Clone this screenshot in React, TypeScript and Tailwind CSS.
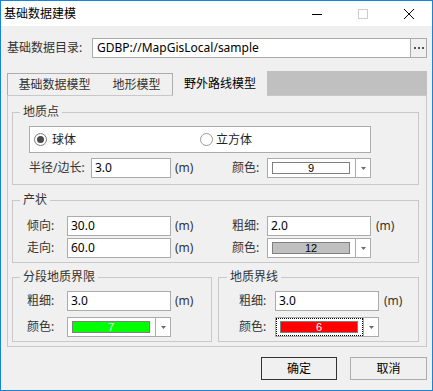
import React from "react";

function Input({ value, w }: { value: string; w: string }) {
  return (
    <div className={"h-[20px] border border-[#ababab] bg-white flex items-center pl-[3px] text-black shrink-0 " + w}>
      {value}
    </div>
  );
}

function Combo({
  num,
  swatch,
  numColor,
  focused,
}: {
  num: string;
  swatch: string;
  numColor: string;
  focused?: boolean;
}) {
  return (
    <div className="w-[104px] h-[20px] border border-[#ababab] bg-white flex shrink-0">
      <div
        className={
          focused
            ? "flex-1 flex items-center pl-[3px] pr-[4px] border border-dotted border-black"
            : "flex-1 flex items-center pl-[4px] pr-[5px]"
        }
      >
        <div
          className={
            "flex-1 h-[12px] border border-[#808080] flex items-center justify-center text-[11px] leading-none font-['Liberation_Sans',sans-serif] " +
            swatch +
            " " +
            numColor
          }
        >
          {num}
        </div>
      </div>
      <div className="w-[15px] border-l border-[#ababab] flex items-center justify-center">
        <svg width="5" height="3" viewBox="0 0 5 3">
          <path d="M0 0H5L2.5 3Z" fill="#6a6a6a" />
        </svg>
      </div>
    </div>
  );
}

function Group({
  title,
  titleLeft,
  className,
  children,
}: {
  title: string;
  titleLeft: string;
  className: string;
  children: React.ReactNode;
}) {
  return (
    <div className={"relative border border-[#c8c8c8] flex flex-col " + className}>
      <span className={"absolute top-[-9px] px-[3px] bg-[#f0f0f0] leading-[16px] text-[#333] " + titleLeft}>
        {title}
      </span>
      {children}
    </div>
  );
}

function Unit({ ml }: { ml: string }) {
  return <span className={"text-[#333] " + ml}>(m)</span>;
}

export default function App() {
  return (
    <div className="w-[433px] h-[391px] border border-[#1883d7] flex flex-col bg-[#f0f0f0] font-['Noto_Sans','Noto_Sans_CJK_SC',sans-serif] text-[12px] leading-[16px] text-[#333] overflow-hidden">
      {/* Title bar */}
      <div className="h-[25px] bg-white flex items-center shrink-0">
        <span className="pl-[3px] text-black">基础数据建模</span>
        <div className="ml-auto flex">
          <div className="w-[46px] h-[25px] flex items-center justify-center">
            <svg width="10" height="10" viewBox="0 0 10 10">
              <path d="M0 5.5H10" stroke="#000" strokeWidth="1" />
            </svg>
          </div>
          <div className="w-[46px] h-[25px] flex items-center justify-center">
            <svg width="10" height="10" viewBox="0 0 10 10">
              <rect x="0.5" y="0.5" width="9" height="9" fill="none" stroke="#cccccc" strokeWidth="1" />
            </svg>
          </div>
          <div className="w-[46px] h-[25px] flex items-center justify-center">
            <svg width="10" height="10" viewBox="0 0 10 10">
              <path d="M0 0L10 10M10 0L0 10" stroke="#000" strokeWidth="1" />
            </svg>
          </div>
        </div>
      </div>

      {/* Content */}
      <div className="flex-1 flex flex-col pl-[6px] pt-[12px]">
        {/* Directory row */}
        <div className="flex h-[20px] items-center">
          <span className="w-[85px] shrink-0 text-[#333]">基础数据目录:</span>
          <div className="w-[319px] h-[20px] border border-[#ababab] bg-white flex items-center pl-[4px] text-black">
            GDBP://MapGisLocal/sample
          </div>
          <div className="w-[17px] h-[20px] -ml-px border border-[#ababab] bg-[#f0f0f0] flex items-center justify-center gap-[2px]">
            <div className="w-[2px] h-[2px] bg-[#555]" />
            <div className="w-[2px] h-[2px] bg-[#555]" />
            <div className="w-[2px] h-[2px] bg-[#555]" />
          </div>
        </div>

        {/* Tabs */}
        <div className="mt-[13px] flex h-[24px] w-[420px] items-start">
          <div className="mt-[2px] h-[22px] flex border-t border-l border-r border-[#adadad]">
            <div className="w-[93px] h-full flex items-center justify-center text-[#333]">基础数据模型</div>
            <div className="w-[71px] h-full flex items-center justify-center text-[#333]">地形模型</div>
          </div>
          <div className="w-[94px] h-[25px] relative z-10 bg-[#f0f0f0] flex items-center justify-center text-black">
            野外路线模型
          </div>
          <div className="flex-1 h-[24px] bg-[#c0c0c0]" />
        </div>

        {/* Panel */}
        <div className="w-[420px] h-[252px] border border-[#c8c8c8] flex flex-col">
          {/* 地质点 */}
          <Group title="地质点" titleLeft="left-[7px]" className="mt-[16px] ml-[4px] w-[407px] h-[73px]">
            <div className="mt-[13px] ml-[16px] w-[342px] h-[27px] border border-[#ababab] bg-white flex items-center pl-[4px]">
              <div className="w-[166px] flex items-center gap-[5px]">
                <div className="w-[13px] h-[13px] rounded-full border border-[#7a7a7a] bg-white flex items-center justify-center">
                  <div className="w-[7px] h-[7px] rounded-full bg-[#4a4a4a]" />
                </div>
                <span className="text-[#222]">球体</span>
              </div>
              <div className="flex items-center gap-[3px]">
                <div className="w-[13px] h-[13px] rounded-full border border-[#9a9a9a] bg-white" />
                <span className="text-[#222]">立方体</span>
              </div>
            </div>
            <div className="mt-[5px] flex h-[20px] items-center">
              <div className="w-[219px] flex items-center pl-[16px]">
                <span className="w-[62px] shrink-0">半径/边长:</span>
                <Input value="3.0" w="w-[80px]" />
                <Unit ml="ml-[4px]" />
              </div>
              <div className="flex items-center">
                <span className="w-[35px] shrink-0">颜色:</span>
                <Combo num="9" swatch="bg-white" numColor="text-black" />
              </div>
            </div>
          </Group>

          {/* 产状 */}
          <Group title="产状" titleLeft="left-[7px]" className="mt-[15px] ml-[4px] w-[407px] h-[63px]">
            <div className="mt-[15px] flex h-[20px] items-center">
              <div className="w-[219px] flex items-center pl-[14px]">
                <span className="w-[40px] shrink-0">倾向:</span>
                <Input value="30.0" w="w-[104px]" />
                <Unit ml="ml-[4px]" />
              </div>
              <div className="flex items-center">
                <span className="w-[35px] shrink-0">粗细:</span>
                <Input value="2.0" w="w-[104px]" />
                <Unit ml="ml-[5px]" />
              </div>
            </div>
            <div className="mt-[2px] flex h-[20px] items-center">
              <div className="w-[219px] flex items-center pl-[14px]">
                <span className="w-[40px] shrink-0">走向:</span>
                <Input value="60.0" w="w-[104px]" />
                <Unit ml="ml-[4px]" />
              </div>
              <div className="flex items-center">
                <span className="w-[35px] shrink-0">颜色:</span>
                <Combo num="12" swatch="bg-[#c0c0c0]" numColor="text-black" />
              </div>
            </div>
          </Group>

          {/* Bottom groups */}
          <div className="mt-[14px] ml-[4px] flex gap-[6px]">
            <Group title="分段地质界限" titleLeft="left-[7px]" className="w-[200px] h-[65px]">
              <div className="mt-[13px] flex h-[20px] items-center pl-[14px]">
                <span className="w-[40px] shrink-0">粗细:</span>
                <Input value="3.0" w="w-[104px]" />
                <Unit ml="ml-[4px]" />
              </div>
              <div className="mt-[6px] flex h-[20px] items-center pl-[14px]">
                <span className="w-[40px] shrink-0">颜色:</span>
                <Combo num="7" swatch="bg-[#00ff00]" numColor="text-white" />
              </div>
            </Group>
            <Group title="地质界线" titleLeft="left-[8px]" className="w-[201px] h-[65px]">
              <div className="mt-[13px] flex h-[20px] items-center pl-[20px]">
                <span className="w-[36px] shrink-0">粗细:</span>
                <Input value="3.0" w="w-[104px]" />
                <Unit ml="ml-[5px]" />
              </div>
              <div className="mt-[6px] flex h-[20px] items-center pl-[20px]">
                <span className="w-[36px] shrink-0">颜色:</span>
                <Combo num="6" swatch="bg-[#ff0000]" numColor="text-white" focused />
              </div>
            </Group>
          </div>
        </div>

        {/* Buttons */}
        <div className="mt-[10px] flex w-[420px] justify-end gap-[13px]">
          <div className="w-[76px] h-[23px] border border-[#333] bg-[#f0f0f0] flex items-center justify-center text-black">
            确定
          </div>
          <div className="w-[77px] h-[23px] border border-[#adadad] bg-[#f0f0f0] flex items-center justify-center text-black">
            取消
          </div>
        </div>
      </div>
    </div>
  );
}
